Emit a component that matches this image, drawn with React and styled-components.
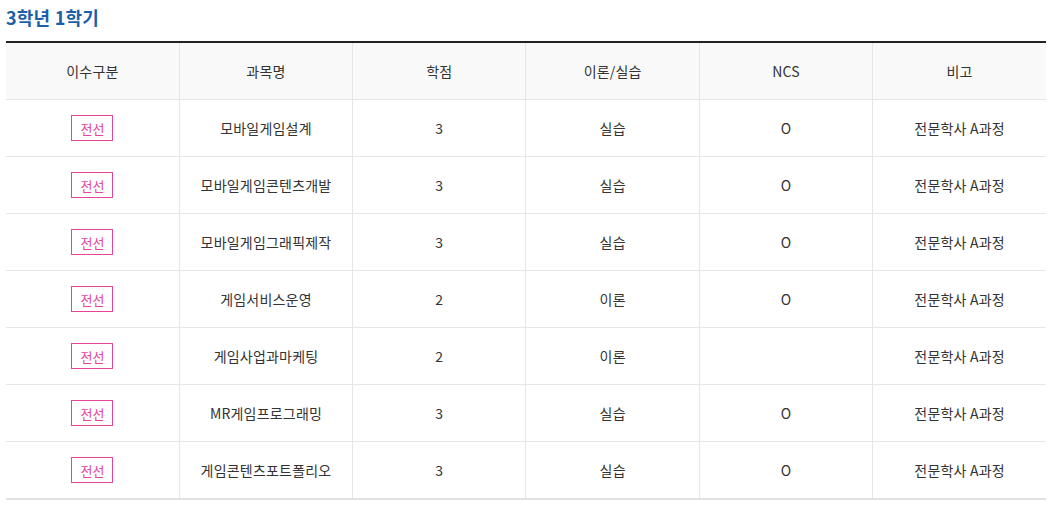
import React from "react";
import styled, { createGlobalStyle } from "styled-components";

const Global = createGlobalStyle`
  html, body { margin: 0; padding: 0; background: #fff; }
  body { font-family: "Noto Sans CJK KR", "Noto Sans", sans-serif; color: #333; }
`;

const Wrap = styled.div`
  padding: 6px 2px 0 6px;
`;

const Title = styled.h3`
  margin: 0;
  font-size: 18px;
  line-height: 23px;
  font-weight: 700;
  color: #1d5fa6;
  letter-spacing: 0.2px;
`;

const Table = styled.table`
  margin-top: 12px;
  width: 1040px;
  border-collapse: collapse;
  table-layout: fixed;
  border-top: 2px solid #222;
  border-bottom: 2px solid #e2e2e2;
`;

const Th = styled.th`
  height: 56px;
  padding: 0;
  background: #f9f9f9;
  font-weight: 400;
  font-size: 14px;
  letter-spacing: 0.2px;
  color: #333;
  text-align: center;
  border-bottom: 1px solid #e6e6e6;
  & + & { border-left: 1px solid #e6e6e6; }
`;

const Td = styled.td`
  height: 56px;
  padding: 0;
  font-size: 14px;
  letter-spacing: 0.2px;
  color: #333;
  text-align: center;
  border-bottom: 1px solid #e6e6e6;
  & + & { border-left: 1px solid #e6e6e6; }
`;

const Badge = styled.span`
  display: inline-flex;
  align-items: center;
  justify-content: center;
  box-sizing: border-box;
  width: 42px;
  height: 26px;
  border: 1px solid #e4449c;
  color: #e4449c;
  font-size: 13px;
  letter-spacing: 0;
`;

const rows = [
  ["모바일게임설계", "3", "실습", "O"],
  ["모바일게임콘텐츠개발", "3", "실습", "O"],
  ["모바일게임그래픽제작", "3", "실습", "O"],
  ["게임서비스운영", "2", "이론", "O"],
  ["게임사업과마케팅", "2", "이론", ""],
  ["MR게임프로그래밍", "3", "실습", "O"],
  ["게임콘텐츠포트폴리오", "3", "실습", "O"],
];

export default function App() {
  return (
    <>
      <Global />
      <Wrap>
        <Title>3학년 1학기</Title>
        <Table>
          <thead>
            <tr>
              <Th>이수구분</Th>
              <Th>과목명</Th>
              <Th>학점</Th>
              <Th>이론/실습</Th>
              <Th>NCS</Th>
              <Th>비고</Th>
            </tr>
          </thead>
          <tbody>
            {rows.map((r, i) => (
              <tr key={i}>
                <Td><Badge>전선</Badge></Td>
                <Td>{r[0]}</Td>
                <Td>{r[1]}</Td>
                <Td>{r[2]}</Td>
                <Td>{r[3]}</Td>
                <Td>전문학사 A과정</Td>
              </tr>
            ))}
          </tbody>
        </Table>
      </Wrap>
    </>
  );
}
